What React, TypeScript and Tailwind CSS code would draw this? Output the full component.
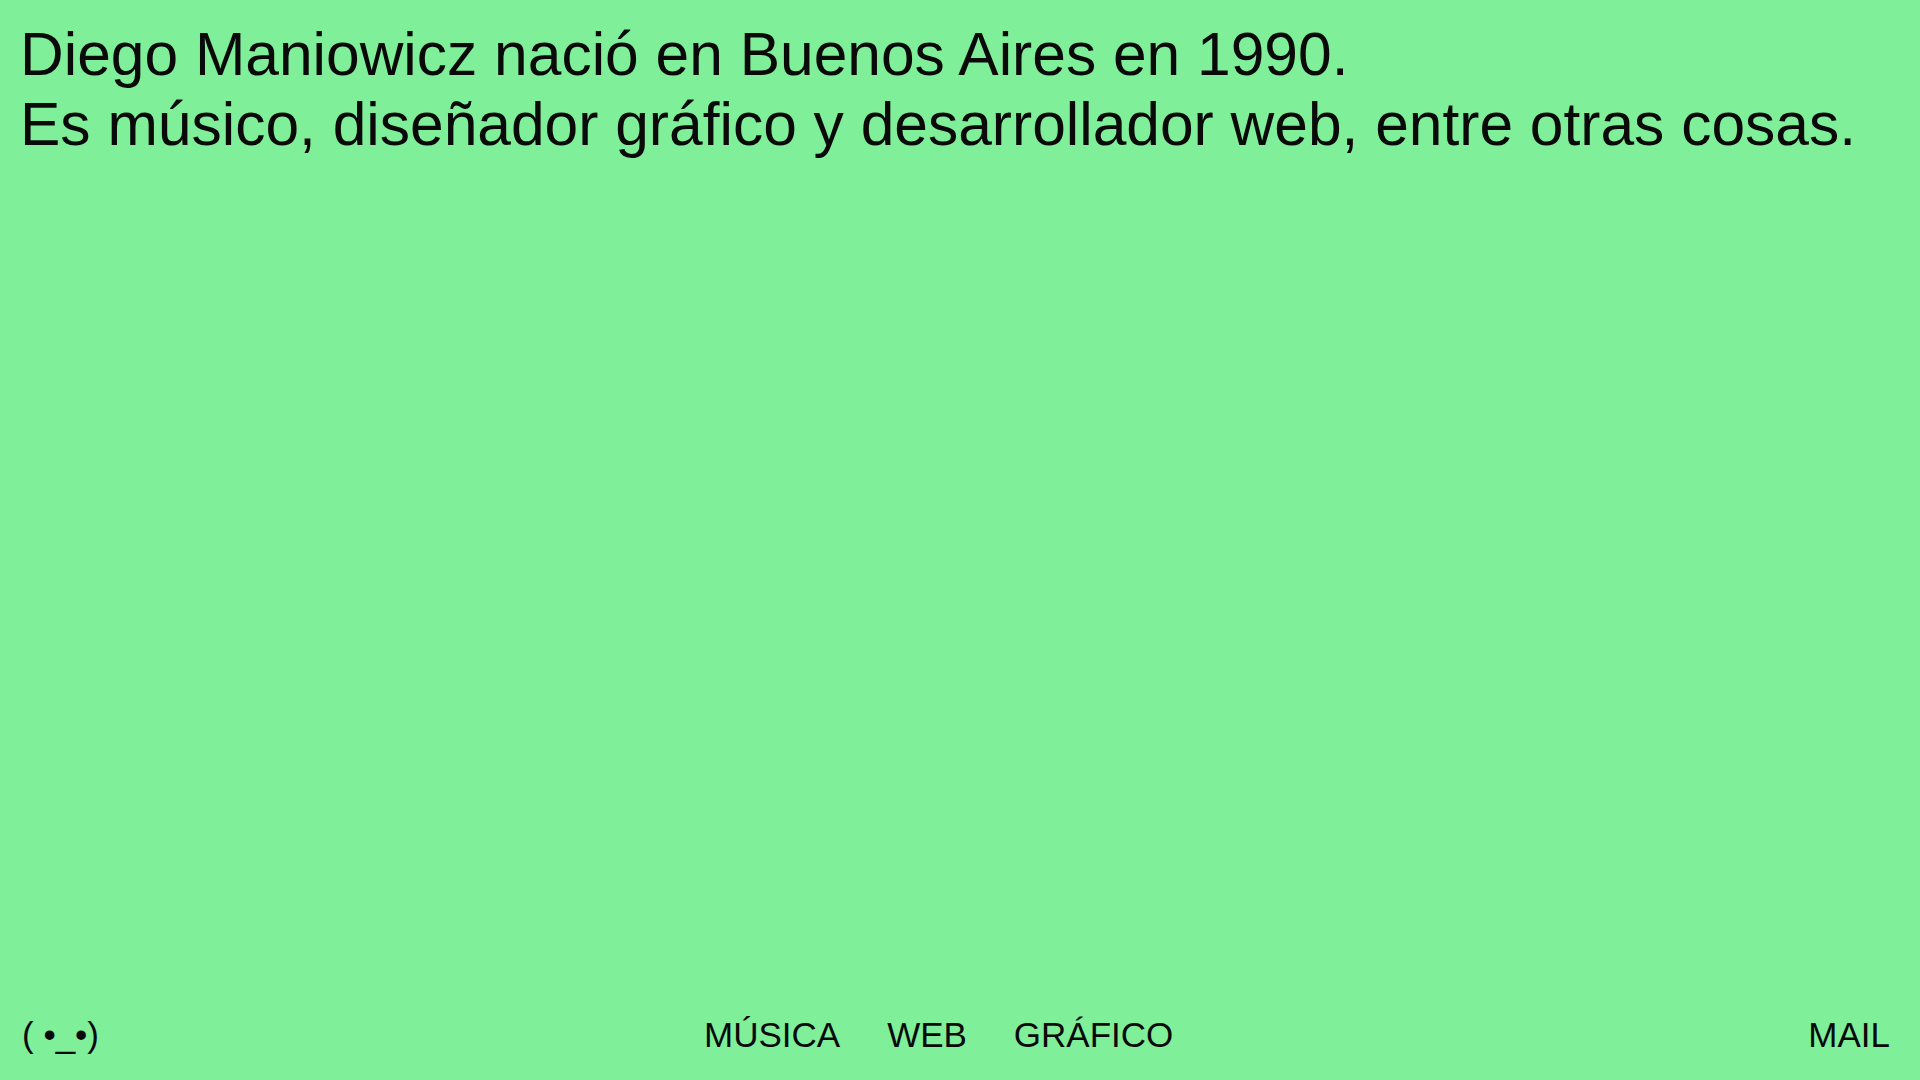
import React from 'react';

export default function App() {
  const links = ['MÚSICA', 'WEB', 'GRÁFICO'];

  return (
    <div className="flex h-screen w-full flex-col justify-between bg-[#80ef99] text-[#0a0a0a] font-['Liberation_Sans',sans-serif]">
      {/* intro */}
      <div className="px-[20px] pt-[19px] text-[60.5px] leading-[70px]">
        <p>Diego Maniowicz nació en Buenos Aires en 1990.</p>
        <p>Es músico, diseñador gráfico y desarrollador web, entre otras cosas.</p>
      </div>

      {/* footer */}
      <div className="flex items-center justify-between pb-[25px] pl-[22px] pr-[30px] text-[35px] leading-[40px]">
        <span>( •_•)</span>
        <nav className="mr-[30px] flex gap-[47px]">
          {links.map((l) => (
            <a key={l} href="#" className="hover:underline">
              {l}
            </a>
          ))}
        </nav>
        <a href="#" className="hover:underline">
          MAIL
        </a>
      </div>
    </div>
  );
}
